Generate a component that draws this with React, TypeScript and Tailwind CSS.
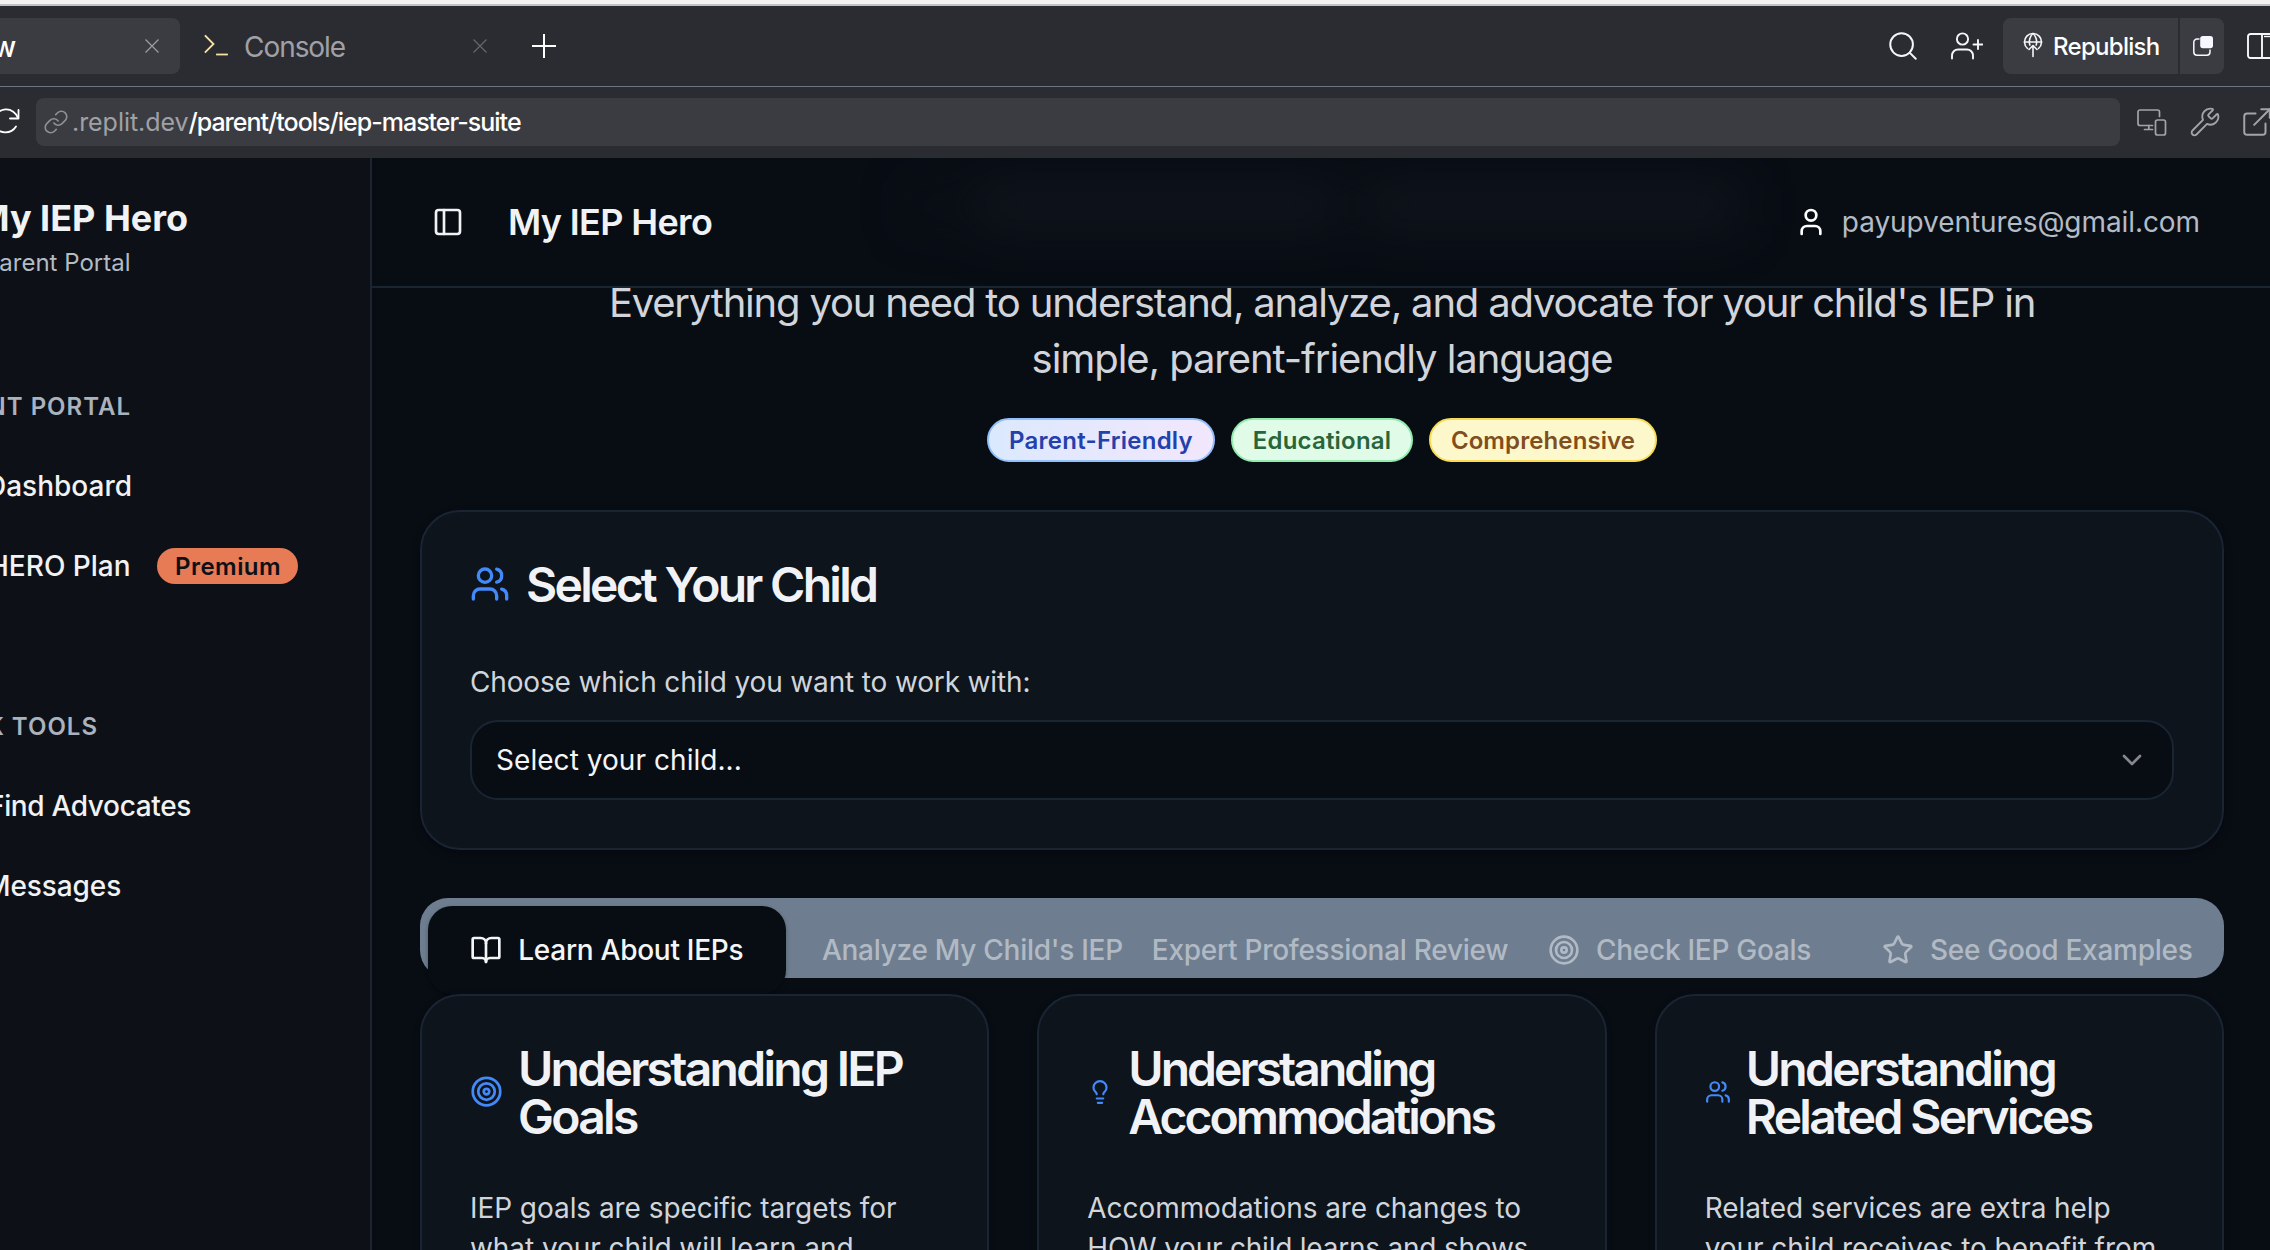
import type { ReactNode } from "react";
import { BookOpen, ChevronDown, ExternalLink, Lightbulb, Link, PanelLeft, Search, Star, Target, User, Users, Wrench } from "lucide-react";

type IconProps = { className?: string };

function TerminalIcon({ className }: IconProps) {
  return (
    <svg viewBox="0 0 24 22" className={className} fill="none" stroke="currentColor" strokeWidth="1.8" strokeLinecap="square">
      <path d="M1.5 2l8 8-8 8" />
      <path d="M13 20.5h10" />
    </svg>
  );
}

function CloseIcon({ className }: IconProps) {
  return (
    <svg viewBox="0 0 14 14" className={className} fill="none" stroke="currentColor" strokeWidth="1.3">
      <path d="M.5.5l13 13M13.5.5l-13 13" />
    </svg>
  );
}

function PlusIcon({ className }: IconProps) {
  return (
    <svg viewBox="0 0 24 24" className={className} fill="none" stroke="currentColor" strokeWidth="2">
      <path d="M12 0v24M0 12h24" />
    </svg>
  );
}

function ReloadIcon({ className }: IconProps) {
  return (
    <svg viewBox="0 0 28 28" className={className} fill="none" stroke="currentColor" strokeWidth="1.8" strokeLinecap="round" strokeLinejoin="round">
      <path d="M26.5 2v8.5H18" />
      <path d="M26 10A12.5 12.5 0 0 0 2 11" />
      <path d="M2.500 18A12.500 12.500 0 0 0 24 18.500" />
    </svg>
  );
}

function PersonPlusIcon({ className }: IconProps) {
  return (
    <svg viewBox="0 0 32 28" className={className} fill="none" stroke="currentColor" strokeWidth="1.9" strokeLinecap="round">
      <circle cx="11.500" cy="7" r="5.600" />
      <path d="M1 26.500v-3a6 6 0 0 1 6-6h9a6 6 0 0 1 6 6v3" />
      <path d="M27 8v9M22.500 12.500h9" />
    </svg>
  );
}

function GlobeUpIcon({ className }: IconProps) {
  return (
    <svg viewBox="0 0 20 26" className={className} fill="none" stroke="currentColor" strokeWidth="1.600" strokeLinecap="round" strokeLinejoin="round">
      <path d="M4.500 16.500a8.500 8.500 0 1 1 11 0" />
      <path d="M1.500 10h17" />
      <path d="M6.800 13C5.500 8.500 7.500 3.500 10 1.500c2.500 2 4.500 7 3.200 11.500" />
      <path d="M10 24.500V13.500M6 17.500l4-4 4 4" />
    </svg>
  );
}

function CopyFilledIcon({ className }: IconProps) {
  return (
    <svg viewBox="0 0 20 20" className={className} fill="none">
      <path d="M6.500 3H4a3.200 3.200 0 0 0-3.200 3.200V16A3.200 3.200 0 0 0 4 19.200h9.800A3.200 3.200 0 0 0 17 16v-2.500" stroke="currentColor" strokeWidth="1.500" />
      <rect x="7.200" width="12.800" height="12.200" rx="2.600" fill="currentColor" />
    </svg>
  );
}

function SplitPanelIcon({ className }: IconProps) {
  return (
    <svg viewBox="0 0 32 26" className={className} fill="none" stroke="currentColor" strokeWidth="1.900">
      <rect x="1" y="1" width="30" height="24" rx="2.500" />
      <path d="M15 1v24" />
      <path d="M17 3.500h12" strokeWidth="1.400" />
    </svg>
  );
}

function DevicesIcon({ className }: IconProps) {
  return (
    <svg viewBox="0 0 30 27" className={className} fill="none" stroke="currentColor" strokeWidth="1.700" strokeLinejoin="round" strokeLinecap="round">
      <path d="M22.500 7.500V3a2 2 0 0 0-2-2H3a2 2 0 0 0-2 2v11.500a2 2 0 0 0 2 2h12.500" />
      <path d="M11.800 16.500v4M7.500 20.500h8" />
      <rect x="18.500" y="11" width="10" height="15" rx="2" />
    </svg>
  );
}

function BrowserChrome() {
  return (
    <div className="shrink-0 bg-[#2b2c31]">
      <div className="h-1 bg-[#f1f2f1]" />
      <div className="h-0.5 bg-[#bcc4c1]" />
      <div className="flex h-20 items-start pt-3">
        <div className="flex h-14 w-[180px] items-center justify-between rounded-r-lg bg-[#3b3c41] pr-[21px]">
          <span className="-ml-[7px] pt-0.5 text-[28px] font-medium text-white">w</span>
          <CloseIcon className="size-3.5 text-[#999ba1]" />
        </div>
        <div className="flex h-14 w-[307px] items-center pl-6">
          <TerminalIcon className="-mt-0.5 h-[22px] w-6 text-[#f7e3a1]" />
          <span className="ml-4 pt-0.5 text-[28px] tracking-[-1.05px] text-[#a0a1a7]">Console</span>
          <CloseIcon className="ml-auto size-3.5 text-[#65666c]" />
        </div>
        <div className="flex h-14 items-center pl-[45px]">
          <PlusIcon className="size-6 text-white" />
        </div>
        <div className="ml-auto flex h-14 shrink-0 items-center">
          <Search className="size-[34px] text-[#f5f6f8]" strokeWidth={1.4} />
          <PersonPlusIcon className="ml-[31px] h-7 w-8 text-[#f5f6f8]" />
          <div className="ml-5 flex h-14 w-[175px] items-center rounded-l-lg bg-[#3b3c41] pl-5">
            <GlobeUpIcon className="h-[26px] w-5 -translate-y-px text-[#f5f6f8]" />
            <span className="ml-2.5 pt-0.5 text-[24px] font-medium tracking-[-0.7px] text-white">Republish</span>
          </div>
          <div className="ml-0.5 flex h-14 w-11 items-center rounded-r-lg bg-[#3b3c41] pl-[13px]">
            <CopyFilledIcon className="size-5 text-[#f5f8ff]" />
          </div>
          <div className="ml-[23px] w-[23px] overflow-hidden">
            <SplitPanelIcon className="h-[26px] w-8 max-w-none text-[#f5f6f8]" />
          </div>
        </div>
      </div>
      <div className="h-px bg-[#6d7484]" />
      <div className="flex h-[71px] items-start pt-[11px]">
        <div className="flex h-12 w-9 items-center overflow-hidden">
          <ReloadIcon className="-ml-2 size-7 shrink-0 text-white" />
        </div>
        <div className="flex h-12 w-[2084px] items-center rounded-lg bg-[#3b3c41] pl-[7px] text-[25px]">
          <Link className="size-[26px] text-[#8f9096]" strokeWidth={1.5} />
          <span className="ml-[3px] pt-0.5 tracking-[-0.05px] text-[#a0a1a7]">.replit.dev</span>
          <span className="pt-0.5 font-medium tracking-[-1px] text-white">/parent/tools/iep-master-suite</span>
        </div>
        <div className="flex h-12 items-center text-[#a3a4aa]">
          <DevicesIcon className="ml-[17px] h-[27px] w-[30px]" />
          <Wrench className="ml-[22px] size-8" strokeWidth={1.4} />
          <div className="ml-[19px] w-[30px] overflow-hidden">
            <ExternalLink className="size-[34px]" strokeWidth={1.4} />
          </div>
        </div>
      </div>
    </div>
  );
}

function SideRow({ children }: { children: ReactNode }) {
  return <div className="flex h-20 items-center whitespace-nowrap text-[28px] font-medium text-[#f1f2f4]">{children}</div>;
}

function Sidebar() {
  return (
    <aside className="h-full w-[372px] shrink-0 overflow-hidden border-r-2 border-[#1a2433] bg-[#0d1117]">
      <div className="whitespace-nowrap pt-[38px]">
        <div className="-ml-[24px] text-[36px] leading-[44px] font-bold text-[#f1f2f4]">My IEP Hero</div>
        <div className="-ml-[16px] mt-[7px] text-[24px] leading-8 text-[#b3bbc5]">Parent Portal</div>
      </div>
      <div className="mt-[108px] flex h-10 w-[131px] justify-end whitespace-nowrap text-[24px] leading-10 font-semibold tracking-[1px] text-[#a9b2bd]">PARENT PORTAL</div>
      <div className="mt-[19px]">
        <SideRow><span className="-ml-[14px]">Dashboard</span></SideRow>
        <SideRow>
          <span className="-ml-[12px]">HERO Plan</span>
          <span className="ml-[26px] flex h-9 w-[141px] items-center justify-center rounded-full bg-[#e67b56] pt-0.5 pl-0.5 text-[24px] font-semibold tracking-[0.45px] text-[#0d1117]">Premium</span>
        </SideRow>
      </div>
      <div className="mt-[101px] flex h-10 w-[98px] justify-end whitespace-nowrap text-[24px] leading-10 font-semibold tracking-[1px] text-[#a9b2bd]">QUICK TOOLS</div>
      <div className="mt-[19px]">
        <SideRow><span className="-ml-[12px] tracking-[-0.35px]">Find Advocates</span></SideRow>
        <SideRow><span className="-ml-[15px] tracking-[-0.1px]">Messages</span></SideRow>
      </div>
    </aside>
  );
}

function AppHeader() {
  return (
    <header className="relative z-10 flex h-[130px] shrink-0 items-center overflow-hidden border-b-2 border-[#1a2433] bg-[#080d14] pr-[70px] pl-[60px]">
      <div className="absolute top-5 left-[540px] flex h-14 items-center gap-8 blur-xl">
        <div className="size-8 rounded-full bg-[#0c1118]" />
        <div className="h-11 w-[360px] bg-[#11151c]" />
        <div className="h-11 w-[370px] bg-[#11151c]" />
      </div>
      <PanelLeft className="relative size-8 text-[#f1f2f4]" />
      <span className="relative ml-11 text-[36px] font-semibold tracking-[-0.65px] text-[#f1f2f4]">My IEP Hero</span>
      <User className="relative ml-auto size-8 text-white" />
      <span className="relative ml-[15px] text-[28px] tracking-[-0.08px] text-[#b3bbc5]">payupventures@gmail.com</span>
    </header>
  );
}

function Tab({ active, icon, children }: { active?: boolean; icon?: ReactNode; children: ReactNode }) {
  return (
    <div className={active ? "flex h-[88px] items-center justify-center gap-4 rounded-3xl bg-[#080d14] text-[#f4f5f7] shadow-[0_2px_4px_rgba(0,0,0,0.3)]" : "flex h-[88px] items-center justify-center gap-4 text-[#b1bac4]"}>
      {icon ?? <span className="w-0" />}
      <span>{children}</span>
    </div>
  );
}

function InfoCard({ icon, title, children }: { icon: ReactNode; title: ReactNode; children: ReactNode }) {
  return (
    <div className="h-[420px] rounded-[40px] border-2 border-[#1a2433] bg-[#0d141b] p-12 shadow-[0_2px_6px_rgba(0,0,0,0.3)]">
      <div className="flex items-center">
        {icon}
        <h3 className="translate-y-px text-[48px] leading-[48px] font-semibold whitespace-nowrap text-[#f1f2f6]">{title}</h3>
      </div>
      <p className="mt-12 text-[28px] leading-10 tracking-[-0.06px] whitespace-nowrap text-[#d1d5db]">{children}</p>
    </div>
  );
}

export default function App() {
  return (
    <div className="flex h-[1250px] w-[2270px] flex-col overflow-hidden bg-[#080d14] font-['Inter',sans-serif]">
      <BrowserChrome />
      <div className="flex h-[1092px]">
        <Sidebar />
        <main className="flex min-w-0 flex-1 flex-col overflow-hidden">
          <AppHeader />
          <div className="-mt-[13px] w-[1900px] px-12">
            <p className="text-center text-[40px] leading-[56px] tracking-[-1.19px] text-[#d1d5db]">
              Everything you need to understand, analyze, and advocate for your child's IEP in
              <br />
              <span className="tracking-[-1.07px]">simple, parent-friendly language</span>
            </p>
            <div className="mt-[31px] flex justify-center gap-4 text-[24px] font-semibold">
              <span className="flex h-11 w-[228px] items-center justify-center rounded-full border-2 border-[#93c0fb] bg-linear-to-r from-[#dbe9fd] to-[#f2e7fd] pt-0.5 tracking-[0.25px] text-[#2440ac]">Parent-Friendly</span>
              <span className="flex h-11 w-[182px] items-center justify-center rounded-full border-2 border-[#93ecae] bg-[#e0fbe8] pt-0.5 tracking-[0.2px] text-[#28653a]">Educational</span>
              <span className="flex h-11 w-[228px] items-center justify-center rounded-full border-2 border-[#f9dc56] bg-[#fdf8cb] pt-0.5 tracking-[0.1px] text-[#814e1d]">Comprehensive</span>
            </div>

            <section className="mt-12 h-[340px] rounded-[40px] border-2 border-[#1a2433] bg-[#0d141b] px-12 pt-12 shadow-[0_4px_8px_rgba(0,0,0,0.3)]">
              <div className="flex items-center gap-4">
                <Users className="size-10 text-[#4389fa]" />
                <h2 className="translate-y-px text-[48px] leading-[48px] font-semibold tracking-[-2.73px] text-[#f1f2f6]">Select Your Child</h2>
              </div>
              <p className="mt-12 text-[28px] leading-[52px] tracking-[-0.15px] text-[#d1d5db]">Choose which child you want to work with:</p>
              <div className="mt-3 flex h-20 items-center justify-between rounded-[28px] border-2 border-[#1a2433] bg-[#080d14] px-6 text-[28px] text-[#f4f5f7]">
                <span className="tracking-[0.05px]">Select your child...</span>
                <ChevronDown className="size-8 text-[#85878c]" />
              </div>
            </section>

            <div className="mt-12 grid h-20 grid-cols-5 rounded-[28px] bg-[#6e7e90] p-2 text-[28px] font-medium tracking-[-0.27px] whitespace-nowrap">
              <Tab active icon={<BookOpen className="size-8" />}>Learn About IEPs</Tab>
              <Tab>Analyze My Child's IEP</Tab>
              <Tab>Expert Professional Review</Tab>
              <Tab icon={<Target className="size-8" />}>Check IEP Goals</Tab>
              <Tab icon={<Star className="size-8" />}>See Good Examples</Tab>
            </div>

            <div className="mt-4 grid grid-cols-3 gap-12">
              <InfoCard
                icon={<Target className="mr-[15px] size-[33px] -translate-y-px text-[#4389fa]" />}
                title={<span className="tracking-[-2.7px]">Understanding IEP<br />Goals</span>}
              >
                IEP goals are specific targets for<br />what your child will learn and
              </InfoCard>
              <InfoCard
                icon={<Lightbulb className="mr-[15px] size-[26px] text-[#4389fa]" />}
                title={<span className="tracking-[-2.95px]">Understanding<br />Accommodations</span>}
              >
                Accommodations are changes to<br /><span className="tracking-[-0.22px]">HOW your child learns and shows</span>
              </InfoCard>
              <InfoCard
                icon={<Users className="mr-[15px] size-[26px] text-[#4389fa]" />}
                title={<span className="tracking-[-2.7px]">Understanding<br />Related Services</span>}
              >
                Related services are extra help<br />your child receives to benefit from
              </InfoCard>
            </div>
          </div>
        </main>
      </div>
    </div>
  );
}
